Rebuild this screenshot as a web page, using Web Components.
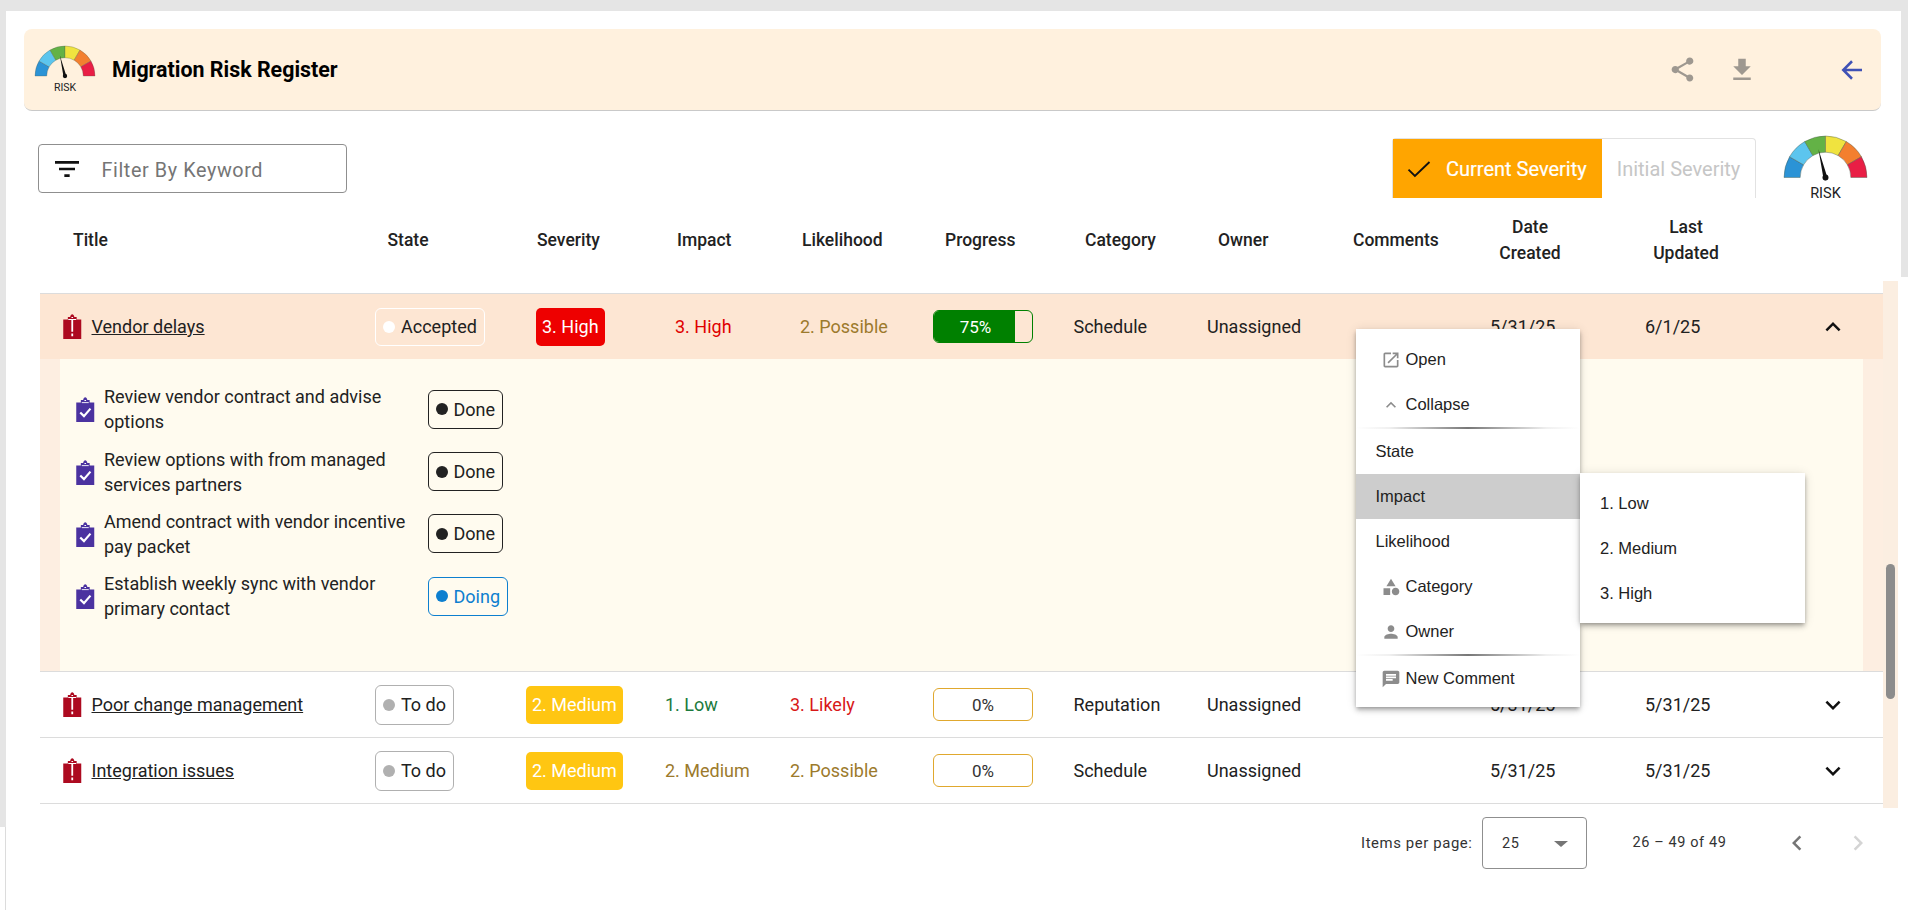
<!DOCTYPE html>
<html><head><meta charset="utf-8">
<style>
html,body{margin:0;padding:0;height:100%}
body{font-family:Roboto,"Liberation Sans",sans-serif;color:#212121;overflow:hidden;width:1908px;height:910px;
background:
 linear-gradient(#e5e5e5,#e5e5e5) 0 0/100% 11px no-repeat,
 linear-gradient(#e5e5e5,#e5e5e5) 0 11px/6px 816px no-repeat,
 linear-gradient(#e5e5e5,#e5e5e5) 1901px 11px/7px 266px no-repeat,
 linear-gradient(#dcdcdc,#dcdcdc) 5px 827px/1px 83px no-repeat,
 #fff;}
</style></head><body>
<risk-app></risk-app>
<script>
const P={
 share:'M18 16.08c-.76 0-1.44.3-1.96.77L8.91 12.7c.05-.23.09-.46.09-.7s-.04-.47-.09-.7l7.05-4.11c.54.5 1.25.81 2.04.81 1.66 0 3-1.34 3-3s-1.34-3-3-3-3 1.34-3 3c0 .24.04.47.09.7L8.04 9.81C7.5 9.31 6.79 9 6 9c-1.66 0-3 1.34-3 3s1.34 3 3 3c.79 0 1.5-.31 2.04-.81l7.12 4.16c-.05.21-.08.43-.08.65 0 1.61 1.31 2.92 2.92 2.92s2.92-1.31 2.92-2.92-1.31-2.92-2.92-2.92z',
 dl:'M19 9h-4V3H9v6H5l7 7 7-7zM5 18v2h14v-2H5z',
 back:'M20 12H5M12 5l-7 7 7 7',
 filter:'M10 18h4v-2h-4v2zM3 6v2h18V6H3zm3 7h12v-2H6v2z',
 check:'M3 12.5l5.5 5.5L21 6',
 open:'M19 19H5V5h7V3H5c-1.11 0-2 .9-2 2v14c0 1.1.89 2 2 2h14c1.1 0 2-.9 2-2v-7h-2v7zM14 3v2h3.59l-9.83 9.83 1.41 1.41L19 6.41V10h2V3h-7z',
 up:'M7.41 15.41L12 10.83l4.59 4.58L18 14l-6-6-6 6z',
 down:'M7.41 8.59L12 13.17l4.59-4.58L18 10l-6 6-6-6z',
 cat:'M12 2l-5.5 9h11L12 2zM17.5 13c-2.49 0-4.5 2.01-4.5 4.5s2.01 4.5 4.5 4.5 4.5-2.01 4.5-4.5-2.01-4.5-4.5-4.5zM3 13.5h8v8H3z',
 person:'M12 12c2.21 0 4-1.79 4-4s-1.79-4-4-4-4 1.79-4 4 1.79 4 4 4zm0 2c-2.67 0-8 1.34-8 4v2h16v-2c0-2.66-5.33-4-8-4z',
 comment:'M20 2H4c-1.1 0-1.99.9-1.99 2L2 22l4-4h14c1.1 0 2-.9 2-2V4c0-1.1-.9-2-2-2zM6 9h12v2H6V9zm8 5H6v-2h8v2zm4-6H6V6h12v2z',
 left:'M15.41 7.41L14 6l-6 6 6 6 1.41-1.41L10.83 12z',
 right:'M10 6L8.59 7.41 13.17 12l-4.58 4.59L10 18l6-6z'
};
function def(name,css,html){
 customElements.define(name,class extends HTMLElement{
  connectedCallback(){ if(this.shadowRoot)return;
   const r=this.attachShadow({mode:'open'});
   const a=n=>this.getAttribute(n)||'';
   r.innerHTML='<style>'+css+'</style>'+(typeof html==='function'?html(a,this):html);
  }
 });
}
def('m-icon',':host{display:inline-flex;line-height:0}svg{display:block}',(a)=>{
 const s=a('size')||24;const c=a('color')||'currentColor';
 const paint=a('sw')?`fill="none" stroke="${c}" stroke-width="${a('sw')}"`:`fill="${c}"`;
 return `<svg width="${s}" height="${s}" viewBox="0 0 24 24" ${paint}><path d="${P[a('name')]}"/></svg>`;
});
def('clip-icon',':host{display:inline-flex;line-height:0}svg{display:block}',(a)=>{
 const c=a('kind')=='late'?'#ad0a20':'#4b32a0';
 const inner=a('kind')=='late'
  ?'<path d="M5 5h8v1.1H5zM8.1 5.5h1.8v12.3H8.1zM8.1 19.6h1.8v2.6H8.1z" fill="#fff"/>'
  :'<path d="M5.5 5.2h7v.9h-7z" fill="#fff"/><path d="M4 15.5l3.7 3.6L14.2 11.6" fill="none" stroke="#fff" stroke-width="2.2"/>';
 return `<svg width="18.5" height="25" viewBox="0 0 18 25"><path d="M0 5.5h4.6V3h2.3C7.3 1.3 8 .3 9 .3s1.7 1 2.1 2.7h2.3v2.5H18V25H0z" fill="${c}"/><path d="M8.2 3h1.6V4H8.2z" fill="#fff"/>${inner}</svg>`;
});
def('risk-gauge',':host{display:block;line-height:0}svg{display:block;overflow:visible}text{font-family:Roboto,"Liberation Sans",sans-serif;fill:#222}',(a)=>{
 const W=+a('w');const seg=[['#2b93d6',180,150],['#5cc5ee',150,120],['#63b246',120,90],['#f0e33f',90,60],['#f37f2f',60,30],['#e91e45',30,0]];
 const cx=50,cy=50,R=50,r=30.5;
 const pt=(d,q)=>[(cx+q*Math.cos(d*Math.PI/180)).toFixed(2),(cy-q*Math.sin(d*Math.PI/180)).toFixed(2)];
 const paths=seg.map(s=>{const A=pt(s[1],R),B=pt(s[2],R),C=pt(s[2],r),D=pt(s[1],r);
  return `<path d="M${A} A${R} ${R} 0 0 1 ${B} L${C} A${r} ${r} 0 0 0 ${D}Z" fill="${s[0]}" stroke="#4a5a4a" stroke-width=".5"/>`}).join('');
 return `<svg width="${W}" height="${W*0.80}" viewBox="0 0 100 80">${paths}
 <path d="M41.5 16 L52 49 A2.6 2.6 0 1 1 47.4 50.4 Z" fill="#111"/>
 <circle cx="50" cy="50" r="3.6" fill="#111"/>
 <text x="50" y="74.5" font-size="17.5" text-anchor="middle">RISK</text></svg>`;
});
def('title-bar',`:host{display:flex;align-items:center;height:82px;background:#fff1de;border-bottom:1px solid #c9c9c9;border-radius:8px;box-sizing:border-box;padding:0 14px 0 11px}
 h1{margin:0 0 0 17px;font:700 21.4px Roboto,sans-serif;color:#000;flex:1}
 m-icon{color:#9e9890}.a{margin-right:30.5px}.b{margin-right:80px}.c{color:#3f51b5}`,
 ()=>`<risk-gauge w="60"></risk-gauge><h1>Migration Risk Register</h1>
 <m-icon class="a" name="share" size="29"></m-icon><m-icon class="b" name="dl" size="30"></m-icon><m-icon class="c" name="back" size="30" sw="2"></m-icon>`);
def('filter-box',`:host{display:flex;align-items:center;width:309px;height:49px;box-sizing:border-box;border:1px solid #8f8f8f;border-radius:4px;padding-left:12px;color:#757575;font:400 19.8px Roboto,sans-serif;letter-spacing:.6px;background:#fff}
 m-icon{color:#111;margin-right:19px}span{margin-top:3px}`,()=>`<m-icon name="filter" size="32"></m-icon><span>Filter By Keyword</span>`);
def('severity-toggle',`:host{display:flex;height:60px;width:364px;box-sizing:border-box;border:1px solid #e2e2e2;border-bottom:none;border-radius:4px 4px 0 0;font:400 20px Roboto,sans-serif;background:#fff}
 .on{background:#ffa500;color:#fff;width:209px;display:flex;align-items:center;padding-left:12px;box-sizing:border-box;gap:13px;white-space:nowrap;-webkit-text-stroke:.2px #fff}
 .off{flex:1;display:flex;align-items:center;justify-content:center;color:#c6c6c6;white-space:nowrap}
 m-icon{color:#111}`,()=>`<div class="on"><m-icon name="check" size="28" sw="1.6"></m-icon>Current Severity</div><div class="off">Initial Severity</div>`);
def('table-head',`:host{display:grid;grid-template-columns:347.5px 149.5px 140px 125px 143px 140px 133px 135px 137px 156px 1fr;height:88px;box-sizing:border-box;padding-bottom:19px;align-items:center;font:500 17.5px/26px Roboto,sans-serif;color:#222;text-align:left}
 div{white-space:nowrap}.c{text-align:center;width:80px}`,
 ()=>`<div style="padding-left:33px">Title</div><div>State</div><div>Severity</div><div>Impact</div><div>Likelihood</div><div>Progress</div><div>Category</div><div>Owner</div><div>Comments</div>
 <div class="c">Date<br>Created</div><div class="c">Last<br>Updated</div>`);
def('state-chip',`:host{display:inline-flex;align-items:center;justify-self:start;box-sizing:border-box;border:1px solid var(--c,#aaa);border-radius:6px;padding:0 7px;gap:6px;white-space:nowrap;font:400 18px Roboto,sans-serif;color:var(--t,#212121);background:transparent}
 i{width:12px;height:12px;border-radius:50%;background:var(--d,#aaa);flex:none}`,()=>`<i></i><slot></slot>`);
def('sev-badge',`:host{display:inline-flex;align-items:center;justify-content:center;height:38px;border-radius:5px;color:#fff;font:400 18px Roboto,sans-serif;background:var(--b);padding:0 6px;box-sizing:border-box;white-space:nowrap}`,()=>`<slot></slot>`);
def('progress-bar',`:host{display:block;width:100px;height:33px;box-sizing:border-box;border:1px solid var(--b);border-radius:6px;overflow:hidden;position:relative;font:400 17px/32px Roboto,sans-serif;text-align:center;color:var(--t)}
 .f{position:absolute;left:0;top:0;bottom:0;background:#008000}span{position:relative;display:block}`,
 (a)=>`<div class="f" style="width:${a('v')}%"></div><span style="${a('shift')?'width:'+a('shift')+'px':''}"><slot></slot></span>`);
def('risk-row',`:host{display:block;border-top:1px solid #dcdcdc;box-sizing:border-box;font:400 18px Roboto,sans-serif;color:#212121}
 .g{display:grid;align-items:center;height:65px;background:var(--bg,#fff)}
 .t{display:flex;align-items:center;padding-left:23px;white-space:nowrap}
 a{color:#212121;text-decoration:underline;margin-left:10px}
 .chev{color:#111;line-height:0}
 div{white-space:nowrap}`,(a)=>{
 const [s,i,l]=a('x').split(',').map(Number);
 const sb=a('sev')=='3. High'?'#ee0000':'#ffc612';
 const stA=a('state')=='Accepted';
 const cs=stA?'--c:#fff;--d:#fff':'--c:#b0b0b0;--d:#b0b0b0';
 const p=a('prog');
 const pv=p=='75'?`<progress-bar v="83" shift="83" style="--b:#008000;--t:#fff">75%</progress-bar>`:`<progress-bar v="0" style="--b:#e0a82e;--t:#333">0%</progress-bar>`;
 return `<div class="g" style="grid-template-columns:335px ${s-375}px ${i-s}px ${l-i}px ${933-l}px 140.5px 133.5px 283px 155px 172.5px 1fr">
 <div class="t"><clip-icon kind="late"></clip-icon><a>${a('name')}</a></div>
 <div><state-chip style="${cs};height:${stA?38:40}px">${a('state')}</state-chip></div>
 <div><sev-badge style="--b:${sb}">${a('sev')}</sev-badge></div>
 <div style="color:${a('ic')}">${a('imp')}</div>
 <div style="color:${a('lc')}">${a('lik')}</div>
 <div>${pv}</div>
 <div>${a('cat')}</div><div>Unassigned</div>
 <div>${a('d1')}</div><div>${a('d2')}</div>
 <div class="chev"><m-icon name="${a('chev')}" size="30"></m-icon></div></div><slot></slot>`;
});
def('task-item',`:host{display:grid;grid-template-columns:28px 323.5px auto;justify-items:start;align-items:center;height:62.4px;font:400 18px/25px Roboto,sans-serif;color:#222;white-space:nowrap}
 clip-icon{margin-top:1px}`,(a)=>{
 const d=a('st')=='Doing';
 return `<clip-icon kind="done"></clip-icon><div><slot></slot></div><state-chip style="height:39px;${d?'--c:#0d7fcf;--d:#0d7fcf;--t:#0d7fcf':'--c:#222;--d:#222'}">${a('st')}</state-chip>`;
});
def('task-panel',`:host{display:block;background:#fdeee1;padding:0 20px;height:312px;box-sizing:border-box}
 .i{background:#fffbef;height:100%;box-sizing:border-box;padding:19px 16px 0}`,()=>`<div class="i"><slot></slot></div>`);
def('menu-item',`:host{display:flex;align-items:center;height:45px;box-sizing:border-box;padding-left:var(--p,20px);font:400 16.5px "Liberation Sans",Arial,sans-serif;color:#222;white-space:nowrap;background:var(--bg,transparent)}
 m-icon{color:#8c8c8c;margin-right:5px}`,(a)=>a('icon')?`<m-icon name="${a('icon')}" size="20"></m-icon><slot></slot>`:'<slot></slot>');
def('menu-sep',`:host{display:block;height:2px;background:linear-gradient(90deg,#fff 0,#f0f0f0 15%,#777 50%,#f0f0f0 85%,#fff 100%)}`,'');
def('pop-menu',`:host{display:block;position:absolute;background:#fff;box-shadow:0 2px 4px -1px rgba(0,0,0,.3),0 4px 5px rgba(0,0,0,.14),0 1px 10px rgba(0,0,0,.12)}`,'<slot></slot>');
def('pager-bar',`:host{display:flex;align-items:center;font:400 14.5px Roboto,sans-serif;letter-spacing:.6px;color:#333;height:52px;white-space:nowrap}
 .l{width:111px;font-size:14.9px}
 .s{width:105px;height:52px;box-sizing:border-box;border:1px solid #8f8f8f;border-radius:4px;margin-left:10px;display:flex;align-items:center;padding-left:19px;position:relative}
 .s b{position:absolute;left:71px;top:23px;border:7px solid transparent;border-top:6px solid #757575;border-bottom:0}
 .r{margin-left:45.5px;width:149.5px;margin-top:-2px}`,()=>`<span class="l">Items per page:</span><div class="s">25<b></b></div><span class="r">26 – 49 of 49</span>
 <m-icon name="left" size="30" color="#757575"></m-icon><span style="width:30.5px"></span><m-icon name="right" size="30" color="#d4d4d4"></m-icon>`);
def('risk-app',`:host{display:block;width:1908px;height:910px;position:relative;overflow:hidden;box-sizing:border-box;padding:11px 0 0 6px}
 .card{width:1895px;height:899px;box-sizing:border-box;padding:18px 20px 0 18px;border-radius:10px 10px 0 0;background:#fff}
 .tool{display:flex;align-items:flex-start;margin:27px 0 0 13.5px;height:67px}
 filter-box{margin-top:6px}severity-toggle{margin-left:1045.5px}risk-gauge{flex:none}.tool risk-gauge{margin:-2px 0 0 28px}
 .tbl{margin-left:16px;width:1843px;position:relative}
 .band{position:absolute;left:1883px;top:281px;width:15px;height:527px;background:#fbeee1}
 .thumb{position:absolute;left:1886px;top:564px;width:8.5px;height:135px;border-radius:5px;background:#8c8c8c}
 pager-bar{position:absolute;left:1361px;top:817px}
 pop-menu.a{left:1355.5px;top:329px;width:224.5px;height:378px;padding-top:8px;box-sizing:border-box}
 pop-menu.b{left:1580px;top:473px;width:225px;height:150px;padding-top:8px;box-sizing:border-box}
 `,()=>`<div class="card">
 <title-bar></title-bar>
 <div class="tool"><filter-box></filter-box><severity-toggle></severity-toggle><risk-gauge w="83"></risk-gauge></div>
 <div class="tbl"><table-head></table-head>
 <risk-row x="536,675,800" name="Vendor delays" state="Accepted" sev="3. High" imp="3. High" ic="#e00000" lik="2. Possible" lc="#9c7a2c" prog="75" cat="Schedule" d1="5/31/25" d2="6/1/25" chev="up" style="--bg:#fde6d3">
 <task-panel>
  <task-item st="Done">Review vendor contract and advise<br>options</task-item>
  <task-item st="Done">Review options with from managed<br>services partners</task-item>
  <task-item st="Done">Amend contract with vendor incentive<br>pay packet</task-item>
  <task-item st="Doing">Establish weekly sync with vendor<br>primary contact</task-item>
 </task-panel></risk-row>
 <risk-row x="526,665,790" name="Poor change management" state="To do" sev="2. Medium" imp="1. Low" ic="#1c7a3e" lik="3. Likely" lc="#d81818" prog="0" cat="Reputation" d1="5/31/25" d2="5/31/25" chev="down"></risk-row>
 <risk-row x="526,665,790" name="Integration issues" state="To do" sev="2. Medium" imp="2. Medium" ic="#9c7a2c" lik="2. Possible" lc="#9c7a2c" prog="0" cat="Schedule" d1="5/31/25" d2="5/31/25" chev="down"></risk-row>
 <div style="border-top:1px solid #dcdcdc"></div>
 </div></div>
 <div class="band"></div><div class="thumb"></div>
 <pager-bar></pager-bar>
 <pop-menu class="a">
  <menu-item icon="open" style="--p:25px">Open</menu-item>
  <menu-item icon="up" style="--p:25px">Collapse</menu-item>
  <menu-sep></menu-sep>
  <menu-item>State</menu-item>
  <menu-item style="--bg:#cdcdcd">Impact</menu-item>
  <menu-item>Likelihood</menu-item>
  <menu-item icon="cat" style="--p:25px">Category</menu-item>
  <menu-item icon="person" style="--p:25px">Owner</menu-item>
  <menu-sep></menu-sep>
  <menu-item icon="comment" style="--p:25px">New Comment</menu-item>
 </pop-menu>
 <pop-menu class="b"><menu-item>1. Low</menu-item><menu-item>2. Medium</menu-item><menu-item>3. High</menu-item></pop-menu>`);
</script>
</body></html>
